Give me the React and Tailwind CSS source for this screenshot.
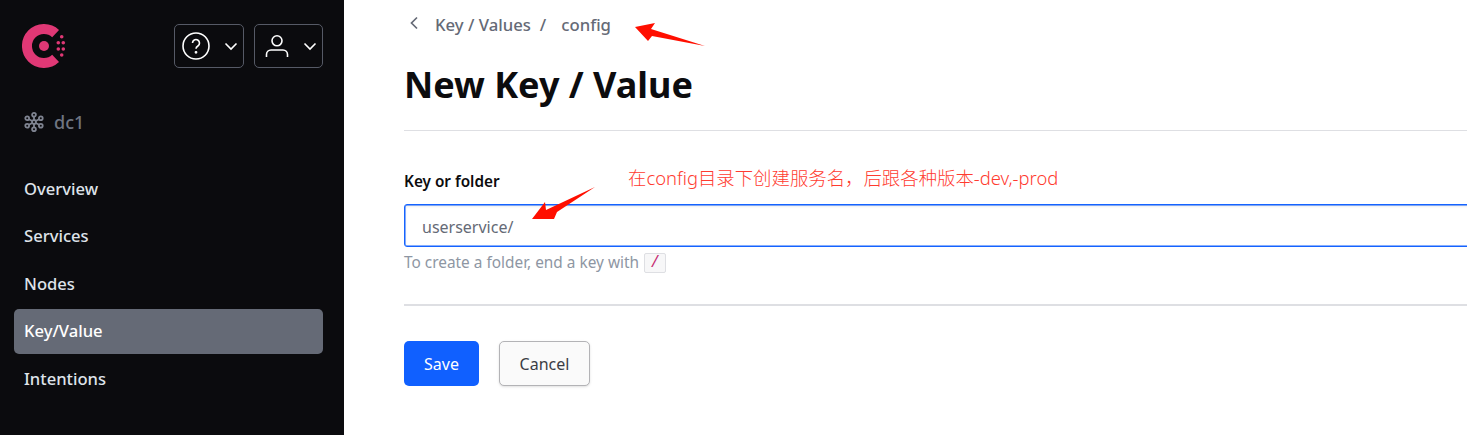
import React from 'react';

const navItems = ['Overview', 'Services', 'Nodes', 'Key/Value', 'Intentions'];

const Logo = () => (
    <svg width="44" height="44" viewBox="0 0 44 44" className="block">
        <path d="M33.6 9.6 A17 17 0 1 0 33.6 34.4" fill="none" stroke="#e03875" strokeWidth="10" />
        <circle cx="22" cy="22" r="5" fill="#e03875" />
        <g fill="#e03875">
            <circle cx="39.7" cy="12.7" r="1.8" />
            <circle cx="36.3" cy="18.7" r="1.8" />
            <circle cx="41.3" cy="18.7" r="1.8" />
            <circle cx="36.3" cy="25" r="1.8" />
            <circle cx="41.3" cy="25" r="1.8" />
            <circle cx="39.7" cy="31" r="1.8" />
        </g>
    </svg>
);

const Chevron = ({ className }) => (
    <svg width="14" height="9" viewBox="0 0 14 9" fill="none" stroke="white" strokeWidth="1.6" className={className}>
        <path d="M1.5 1.5 L7 7 L12.5 1.5" />
    </svg>
);

const ClusterIcon = () => (
    <svg width="20" height="20" viewBox="0 0 20 20" fill="none" stroke="#7f8491" strokeWidth="1.8">
        <circle cx="10" cy="10" r="2" />
        <circle cx="10" cy="2.8" r="1.9" />
        <circle cx="10" cy="17.2" r="1.9" />
        <circle cx="3.2" cy="6.2" r="1.9" />
        <circle cx="16.8" cy="6.2" r="1.9" />
        <circle cx="3.2" cy="13.8" r="1.9" />
        <circle cx="16.8" cy="13.8" r="1.9" />
        <path d="M10 4.7V8M10 12v3.3M4.9 7.2l3.4 1.8M15.1 7.2l-3.4 1.8M4.9 12.8l3.4-1.8M15.1 12.8l-3.4-1.8" />
    </svg>
);

const App = () => {
    return (
        <div className="relative flex h-[435px] w-[1467px] overflow-hidden bg-white font-['Noto_Sans','Noto_Sans_CJK_SC',sans-serif]">
            {/* sidebar */}
            <aside className="flex w-[344px] shrink-0 flex-col bg-[#0b0b0e] pl-[14px] pr-[21px] pt-[24px]">
                <div className="flex h-[44px] items-center justify-between pl-[8px]">
                    <Logo />
                    <div className="flex gap-[10px]">
                        <button className="flex h-[44px] w-[70px] items-center justify-between rounded-[5px] border border-[#565a66] pl-[7px] pr-[5px]">
                            <svg width="28" height="28" viewBox="0 0 28 28" fill="none" stroke="white" strokeWidth="1.6">
                                <circle cx="14" cy="14" r="13" />
                                <path d="M10.5 11a3.5 3.5 0 1 1 5.4 3c-1.2.8-1.9 1.4-1.9 2.8" />
                                <circle cx="14" cy="20.3" r="0.6" fill="white" />
                            </svg>
                            <Chevron />
                        </button>
                        <button className="flex h-[44px] w-[69px] items-center justify-between rounded-[5px] border border-[#565a66] pl-[10px] pr-[5px]">
                            <svg width="24" height="24" viewBox="0 0 24 24" fill="none" stroke="white" strokeWidth="1.6">
                                <circle cx="12" cy="6.8" r="5" />
                                <path d="M1.5 23v-2.5a4.5 4.5 0 0 1 4.5-4.5h12a4.5 4.5 0 0 1 4.5 4.5V23" />
                            </svg>
                            <Chevron />
                        </button>
                    </div>
                </div>
                <div className="mt-[42px] flex h-[24px] items-center gap-[10px] pl-[10px] text-[18px] font-medium leading-[24px] text-[#6f7582]">
                    <ClusterIcon />
                    <span>dc1</span>
                </div>
                <nav className="mt-[32px] flex flex-col gap-[2.5px]">
                    {navItems.map((item) => (
                        <div
                            key={item}
                            className={`flex h-[45px] items-center rounded-[5px] px-[10px] pt-[1.5px] text-[16.6px] font-medium ${
                                item === 'Key/Value' ? 'bg-[#656a76] text-white' : 'text-[#dfe3ea]'
                            }`}
                        >
                            {item}
                        </div>
                    ))}
                </nav>
            </aside>

            {/* main */}
            <main className="min-w-0 flex-1 pl-[60px]">
                <div className="flex h-[50px] items-center pl-[5px] text-[16.7px] font-medium text-[#656a76]">
                    <svg width="10" height="14" viewBox="0 0 10 14" fill="none" stroke="#656a76" strokeWidth="1.7" className="mb-[4px]">
                        <path d="M8 1.5 L2.5 7 L8 12.5" />
                    </svg>
                    <span className="ml-[16px]">Key / Values</span>
                    <span className="ml-[9px]">/</span>
                    <span className="ml-[15px]">config</span>
                </div>
                <h1 className="mt-[10px] h-[50px] text-[36px] font-bold leading-[50px] text-[#0c0c0e]">New Key / Value</h1>
                <div className="mt-[20px] h-px bg-[#dedfe3]" />
                <label className="mt-[40px] block text-[15.3px] font-semibold leading-[20px] text-[#0c0c0e]">Key or folder</label>
                <div className="mt-[13px] flex h-[43px] w-[1100px] items-center rounded-[3px] border border-[#1563ff] pl-[17px] pt-[2px] text-[16px] text-[#656a76] shadow-[inset_0_0_0_0.5px_#1563ff,inset_0_1px_3px_rgba(0,0,0,0.12)]">
                    userservice/
                </div>
                <div className="mt-[4px] flex h-[24px] items-center text-[15.4px] text-[#8e96a3]">
                    To create a folder, end a key with
                    <code className="ml-[5px] flex h-[20px] w-[22px] items-center justify-center rounded-[2px] border border-[#dedfe3] bg-[#f7f7f8] font-['Liberation_Mono',monospace] text-[16px] text-[#c62a71]">/</code>
                </div>
                <div className="mt-[29px] h-[2px] bg-[#dedfe3]" />
                <div className="mt-[35px] flex gap-[20px]">
                    <button className="h-[45px] w-[75px] rounded-[5px] bg-[#1060ff] text-[16px] text-white">Save</button>
                    <button className="h-[45px] w-[91px] rounded-[5px] border border-[#b3b3b6] bg-[#fafafa] text-[16px] text-[#3b3d45] shadow-sm">Cancel</button>
                </div>
            </main>

            {/* red annotations drawn on top of the screenshot */}
            <svg width="1467" height="435" className="pointer-events-none absolute left-0 top-0">
                <polygon points="635,27 655,23 651,29 705,46 652,36 648,41" fill="#ff0f00" />
                <polygon points="532,219 545,202 546,210 595,187 557,212 554,219" fill="#ff0f00" />
            </svg>
            <span className="absolute left-[628px] top-[166px] text-[18.4px] font-light leading-[24px] text-[#ff3b30]">
                在config目录下创建服务名，后跟各种版本-dev,-prod
            </span>
        </div>
    );
};

export default App;
